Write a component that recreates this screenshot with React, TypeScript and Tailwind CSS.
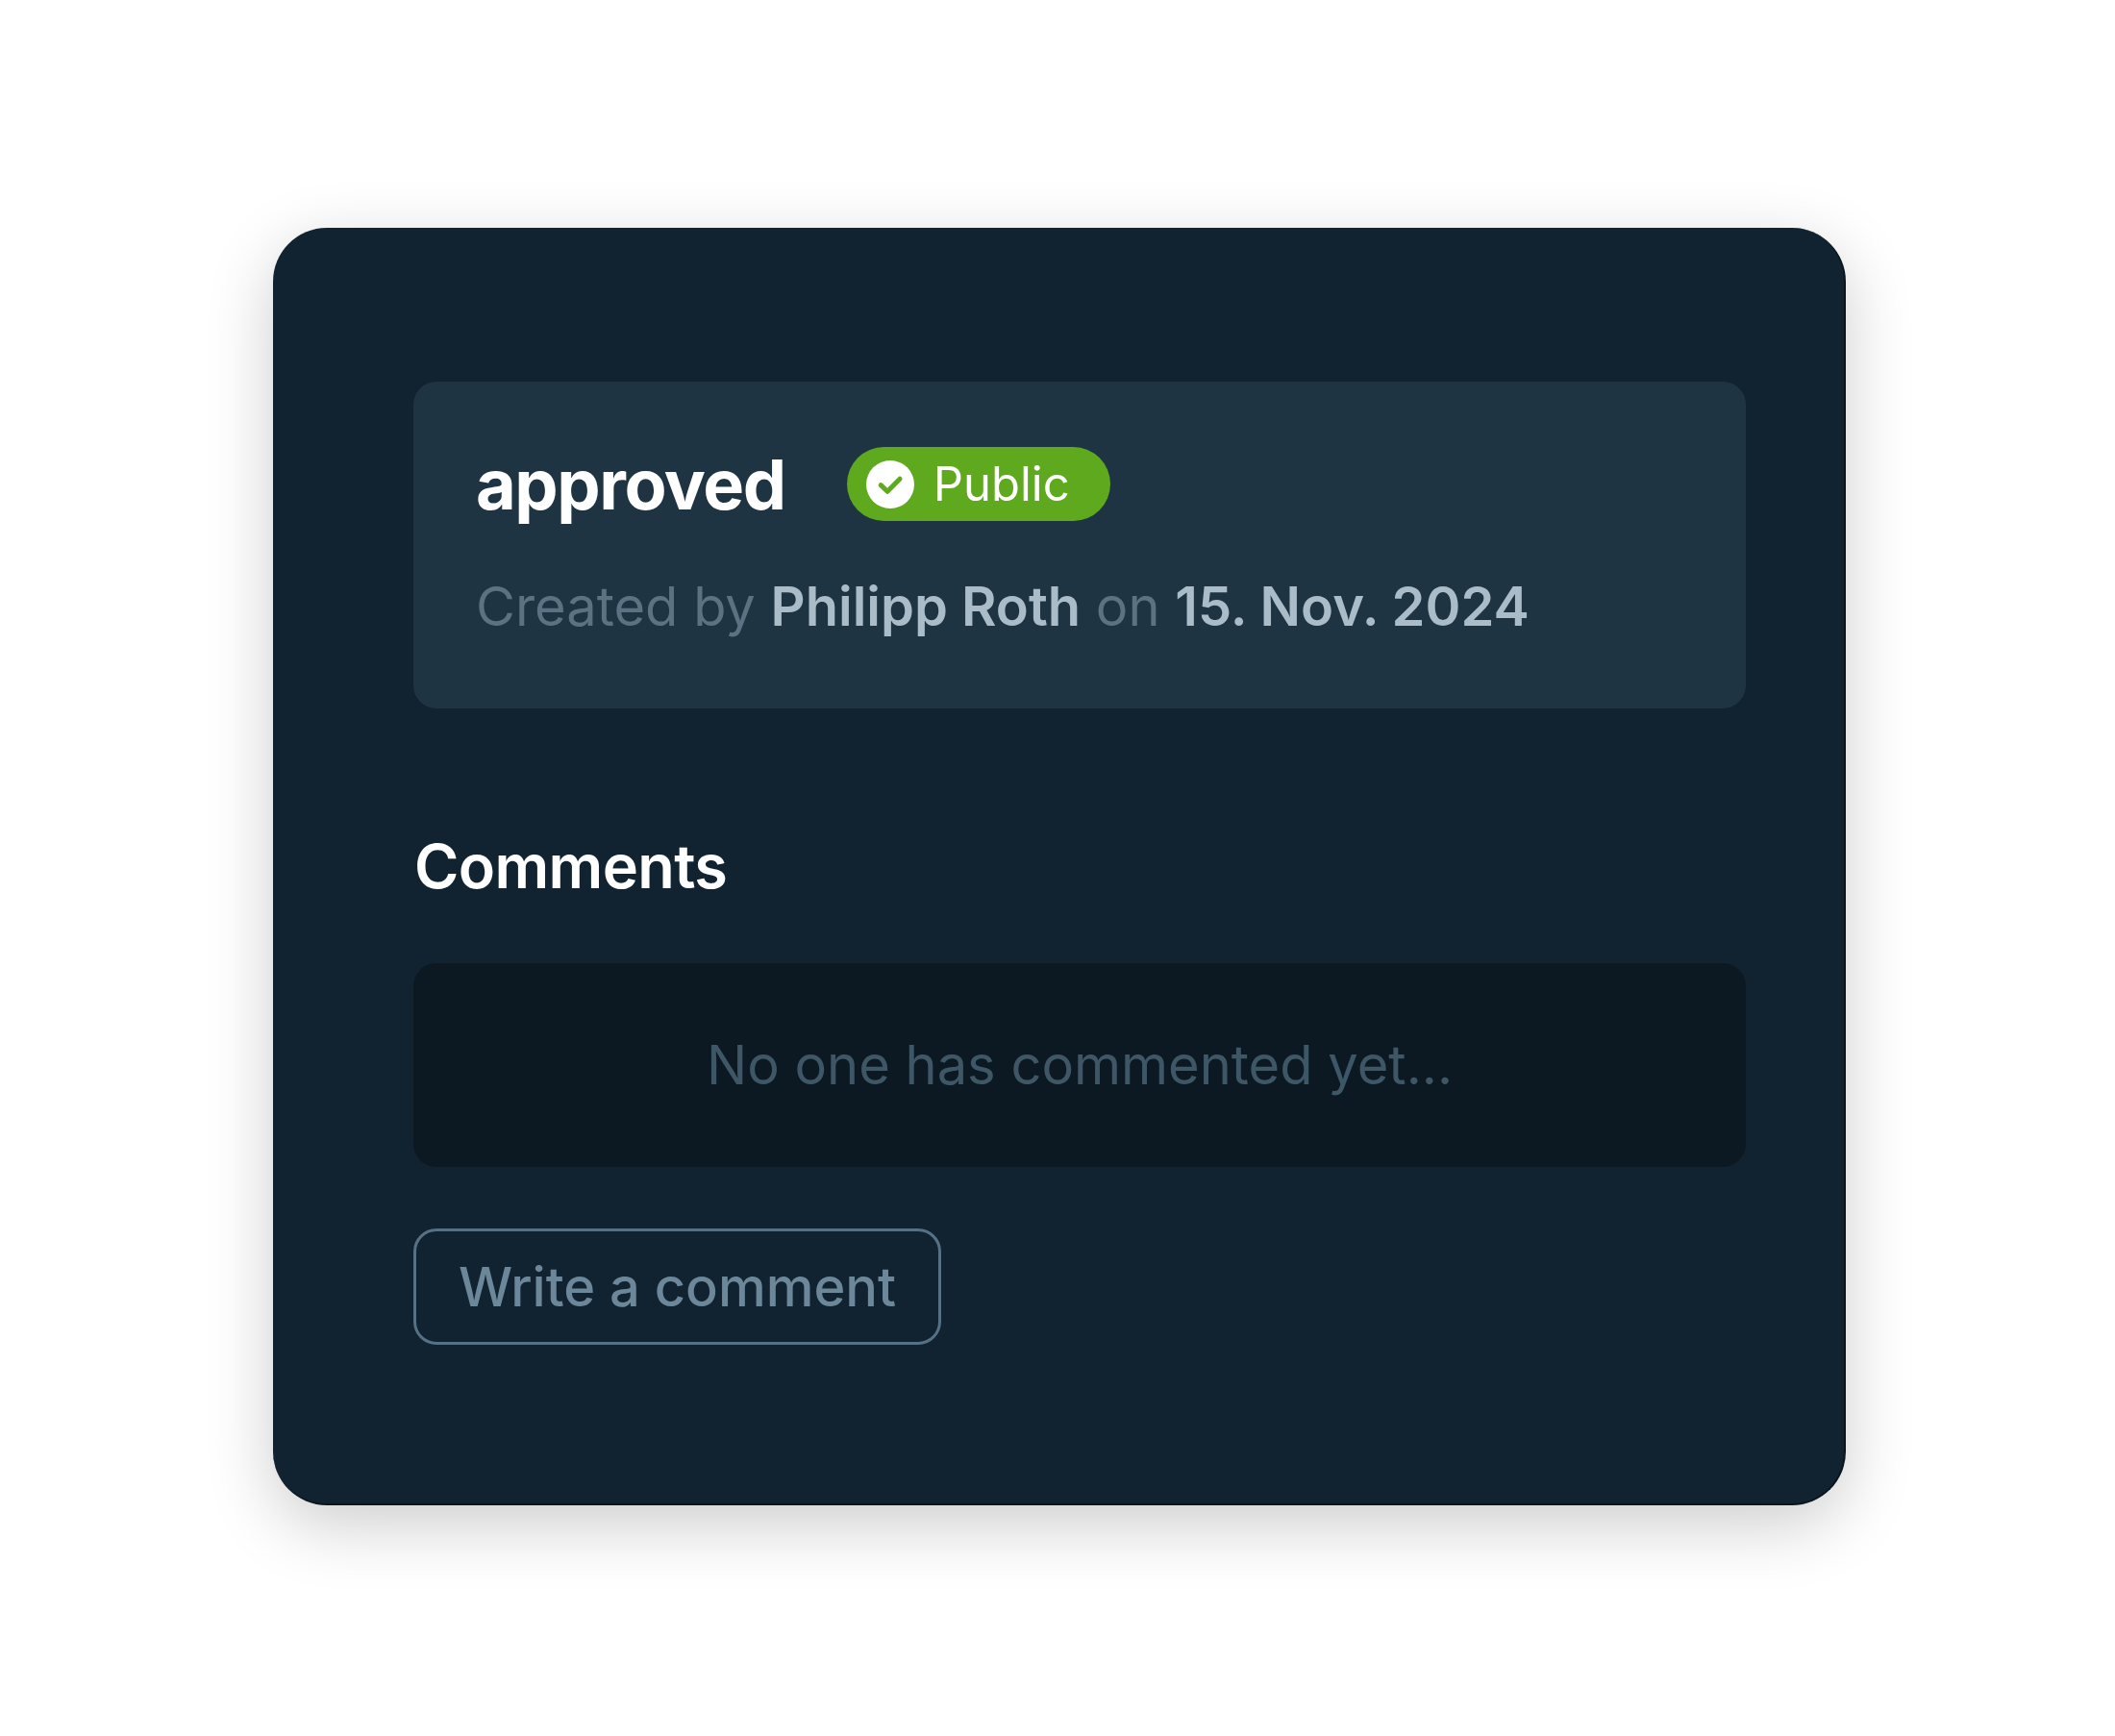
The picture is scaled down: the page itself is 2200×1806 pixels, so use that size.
export default function App() {
  return (
    <div className="w-[2200px] h-[1806px] bg-white pt-[237px] pl-[284px] font-['Inter','Noto_Sans',sans-serif]">
      <div className="w-[1636px] h-[1329px] rounded-[56px] bg-[#112230] border-b-2 border-r-2 border-[#0a161f] pt-[160px] pl-[146px] pr-[102px] shadow-[0_20px_70px_rgba(0,0,0,0.2)]">
        <div className="blur-[0.7px]">
          {/* Document info */}
          <div className="h-[340px] rounded-[24px] bg-[#1f3443] pl-[65px] pt-[68px]">
            <div className="flex items-center h-[77px]">
              <h1 className="text-[72px] leading-[77px] font-bold text-white tracking-[-0.02em]">approved</h1>
              <span className="ml-[64px] flex items-center h-[77px] w-[274px] rounded-full bg-[#5fa91f] pl-[20px] text-white">
                <svg viewBox="0 0 24 24" className="w-[50px] h-[50px]">
                  <circle cx="12" cy="12" r="12" fill="#ffffff" />
                  <path d="M7.3 12.3l3.3 3.2 6.2-6.3" fill="none" stroke="#5fa91f" strokeWidth="2.4" strokeLinecap="round" strokeLinejoin="round" />
                </svg>
                <span className="ml-[20px] text-[49px] leading-none font-normal">Public</span>
              </span>
            </div>
            <p className="mt-[54px] text-[56px] leading-[70px] text-[#5a7282]">
              Created by <span className="font-semibold text-[#a9bcc8]">Philipp Roth</span> on{' '}
              <span className="font-semibold text-[#a9bcc8]">15. Nov. 2024</span>
            </p>
          </div>

          {/* Comments */}
          <h2 className="mt-[130px] ml-[1px] text-[63px] leading-[68px] font-semibold text-white tracking-[-0.01em]">Comments</h2>
          <div className="mt-[67px] h-[212px] rounded-[24px] bg-[#0c1922] flex items-center justify-center text-[56px] text-[#3e5767]">
            No one has commented yet...
          </div>
          <button className="mt-[64px] flex items-center justify-center w-[549px] h-[121px] rounded-[24px] border-[3px] border-[#557186] text-[56px] font-medium text-[#6c8799]">
            Write a comment
          </button>
        </div>
      </div>
    </div>
  );
}
